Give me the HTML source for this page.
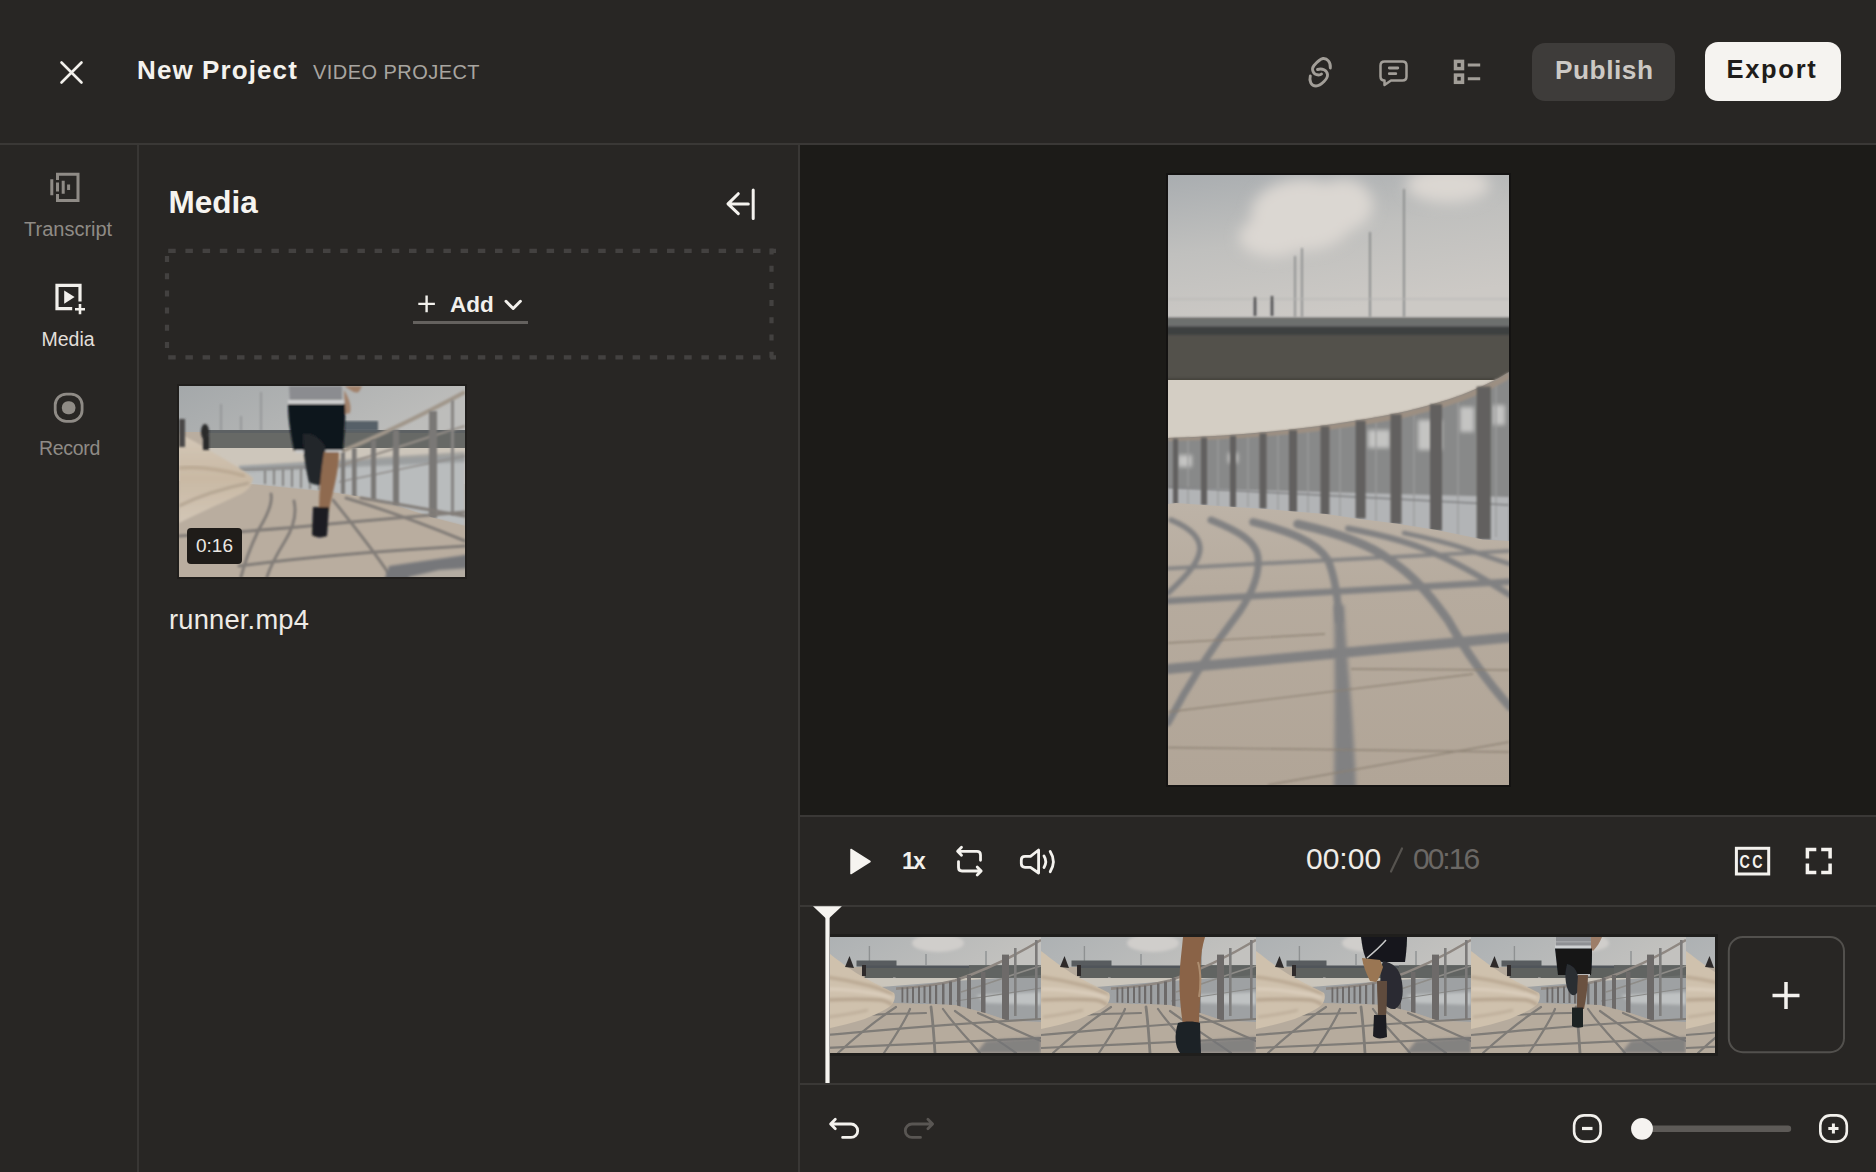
<!DOCTYPE html>
<html><head><meta charset="utf-8">
<style>
*{margin:0;padding:0;box-sizing:border-box}
html,body{width:1876px;height:1172px;overflow:hidden;background:#282624;font-family:"Liberation Sans",sans-serif}
.a{position:absolute}
.t{position:absolute;white-space:nowrap;line-height:1}
svg{position:absolute;overflow:visible}
</style></head><body>
<!-- header -->
<div class="a" style="left:0;top:0;width:1876px;height:144px;background:#282624"></div>
<div class="a" style="left:0;top:143px;width:1876px;height:2px;background:#3a3836"></div>
<svg style="left:60px;top:61px" width="23" height="23" viewBox="0 0 23 23"><path d="M1.5 1.5L21.5 21.5M21.5 1.5L1.5 21.5" stroke="#f2f0ec" stroke-width="2.6" stroke-linecap="round"/></svg>
<div class="t" id="np" style="left:137px;top:56.5px;font-size:26px;font-weight:bold;color:#f4f2ee;letter-spacing:1.1px">New Project</div>
<div class="t" id="vp" style="left:313px;top:62px;font-size:20px;color:#a8a5a0;letter-spacing:0.45px">VIDEO PROJECT</div>

<!-- header right icons -->


<div class="a" style="left:1532px;top:43px;width:143px;height:58px;border-radius:13px;background:#3e3c3a"></div>
<div class="t" id="pub" style="left:1555px;top:57px;font-size:26.3px;font-weight:bold;color:#cdc9c4;letter-spacing:0.5px">Publish</div>
<div class="a" style="left:1705px;top:42px;width:136px;height:59px;border-radius:13px;background:#f5f3f0"></div>
<div class="t" id="exp" style="left:1726.5px;top:57px;font-size:25.5px;font-weight:bold;color:#1e1c1a;letter-spacing:1.7px">Export</div>

<!-- left rail -->
<div class="a" style="left:137px;top:145px;width:2px;height:1027px;background:#383634"></div>
<div class="t" style="left:24px;top:219px;font-size:20px;color:#8f8b86">Transcript</div>
<div class="t" style="left:41.5px;top:329.5px;font-size:19.5px;color:#e2dfda">Media</div>
<div class="t" style="left:39px;top:439px;font-size:19.5px;color:#8f8b86;letter-spacing:-0.3px">Record</div>

<!-- media panel -->
<div class="t" id="mh" style="left:168.5px;top:186.5px;font-size:31.5px;font-weight:bold;color:#f6f4f0">Media</div>
<div class="t" style="left:450px;top:293.5px;font-size:22.5px;font-weight:bold;color:#f2f0ec">Add</div>
<div class="a" style="left:413px;top:321px;width:115px;height:3px;background:#64615e"></div>

<!-- thumbnail -->
<div class="a" style="left:177px;top:384px;width:290px;height:195px;background:#201e1c"></div>
<svg style="left:179px;top:386px" width="286" height="191" viewBox="0 0 286 191">
 <defs>
  <filter id="tb1" x="-10%" y="-10%" width="120%" height="120%"><feGaussianBlur stdDeviation="0.8"/></filter>
  <filter id="tb2" x="-20%" y="-20%" width="140%" height="140%"><feGaussianBlur stdDeviation="1.6"/></filter>
  <linearGradient id="tsky" x1="0" y1="0" x2="1" y2="0.3"><stop offset="0" stop-color="#a4a8aa"/><stop offset="1" stop-color="#bdbdbb"/></linearGradient>
  <linearGradient id="twall" x1="0" y1="0" x2="0" y2="1"><stop offset="0" stop-color="#d3c7b7"/><stop offset="0.5" stop-color="#c9b9a4"/><stop offset="1" stop-color="#d2c6b6"/></linearGradient>
  <clipPath id="tclip"><rect width="286" height="191"/></clipPath>
 </defs>
 <g clip-path="url(#tclip)">
 <rect width="286" height="191" fill="#b9ad9f"/>
 <rect width="286" height="46" fill="url(#tsky)"/>
 <g stroke="#8f9293" stroke-width="1.6" filter="url(#tb1)"><path d="M42 18 V45 M82 6 V45 M62 30 V45"/></g>
 <rect x="28" y="44" width="258" height="4" fill="#5d6163"/>
 <rect x="28" y="47" width="258" height="16" fill="#676966"/>
 <rect x="165" y="35" width="34" height="10" fill="#566068" filter="url(#tb1)"/>
 <rect x="80.5" y="62" width="3.5" height="22" fill="#8a8a88"/>
 <rect y="62" width="286" height="36" fill="#cdc6bb"/>
 <!-- fence -->
 <path d="M60 80 L286 70 V140 L255 132 L218 120 L195 114 L177 110 L150 106 L60 97 Z" fill="#b9bcbd" filter="url(#tb1)"/>
 <path d="M60 80 L286 66 V76 L60 86 Z" fill="#8f9293" opacity="0.7" filter="url(#tb2)"/>
 <g stroke="#757371" stroke-width="1.6" filter="url(#tb1)"><path d="M86 84 V98 M95 83 V99 M104 83 V100 M113 82 V101 M122 82 V102 M131 81 V103 M140 81 V104 M150 80 V106"/></g>
 <path d="M60 84 L150 80" stroke="#8a8886" stroke-width="2" filter="url(#tb1)"/>
 <path d="M161 66 C200 50 245 28 286 6" stroke="#a0968a" stroke-width="4" fill="none" filter="url(#tb1)"/>
 <path d="M160 80 C200 68 245 52 286 40" stroke="#979089" stroke-width="2.2" fill="none" filter="url(#tb1)"/>
 <path d="M160 96 C200 88 245 78 286 70" stroke="#8f8c89" stroke-width="1.5" fill="none" filter="url(#tb1)"/>
 <g fill="#7a7876" filter="url(#tb1)">
  <rect x="162" y="66" width="4" height="42"/><rect x="173" y="62" width="4.5" height="49"/><rect x="192" y="54" width="5" height="60"/>
  <rect x="214" y="44" width="6" height="75"/><rect x="250" y="25" width="8" height="107"/><rect x="272" y="14" width="3" height="115" fill="#868482"/>
 </g>
 <path d="M60 97 L150 106 L177 110 L195 114 L218 120 L255 132 L286 140 V191 H0 V95 Z" fill="#b9ad9f"/>
 <!-- left wall -->
 <path d="M0 48 C10 52 20 58 30 64 C45 73 62 82 74 92 C73 100 68 105 62 108 C45 116 22 126 0 137 Z" fill="url(#twall)" filter="url(#tb1)"/>
 <path d="M0 82 C20 80 45 84 66 90" stroke="#b8a690" stroke-width="3" fill="none" filter="url(#tb2)"/>
 <path d="M0 120 C20 110 45 102 70 97" stroke="#a99a87" stroke-width="2" fill="none" filter="url(#tb2)"/>
 <g fill="#2a2a2c" filter="url(#tb1)"><ellipse cx="26" cy="46" rx="4" ry="8"/><rect x="24" y="50" width="6" height="14"/><rect x="0" y="33" width="6" height="28" fill="#4a4746"/></g>
 <!-- ground shadows -->
 <g fill="none" stroke="#827d78" stroke-width="3" filter="url(#tb1)" stroke-linecap="round">
  <path d="M92 108 C94 118 88 130 80 143 C72 160 66 175 62 191"/>
  <path d="M115 115 C118 128 114 142 106 155 C98 168 92 178 88 191"/>
  <path d="M154 114 C175 140 195 165 212 191"/>
  <path d="M167 112 C210 125 250 140 286 155"/>
  <path d="M182 112 C220 118 255 125 286 130"/>
  <path d="M0 150 C60 146 110 142 150 138 L286 126"/>
  <path d="M60 180 C120 172 200 165 286 160"/>
 </g>
 <path d="M205 195 L210 180 L292 168 V195 Z" fill="#76777a" filter="url(#tb2)"/><path d="M230 191 L260 184 L292 182 V195 H230 Z" fill="#b4aca2" filter="url(#tb2)"/>
 <!-- runner -->
 <g filter="url(#tb1)">
  <path d="M110 0 H163 V16 H111 Z" fill="#8b8c90"/>
  <path d="M109 14 H165 V19 H109 Z" fill="#cfcfcf"/>
  <path d="M165 0 C172 4 178 10 181 4 L183 0 Z M165 4 C170 12 173 20 171 27 L166 28 Z" fill="#a2826c"/>
  <path d="M109 18 H166 C167 35 165 52 164 65 H115 C112 50 109 35 109 18 Z" fill="#11141a"/>
  <path d="M116 64 H163 V67 H117 Z" fill="#c9c9c9"/>
  <path d="M124 48 C130 46 140 50 146 60 L148 95 C146 100 136 100 130 96 C126 80 124 65 124 48 Z" fill="#22252b"/>
  <path d="M145 66 H160 C160 85 154 105 150 124 L140 124 C140 105 142 85 145 66 Z" fill="#8f6a50"/>
  <path d="M134 121 H150 L148 150 C143 152 137 152 133 149 Z" fill="#1c1e22"/>
 </g>
 </g>
</svg>
<div class="a" style="left:187px;top:528px;width:55px;height:36px;border-radius:4px;background:#1f1c19"></div>
<div class="t" style="left:196px;top:536px;font-size:19px;color:#ebe8e3">0:16</div>

<div class="t" id="rn" style="left:169px;top:606px;font-size:27.3px;color:#eeebe6;letter-spacing:0.2px">runner.mp4</div>

<!-- panel divider -->
<div class="a" style="left:798px;top:145px;width:2px;height:1027px;background:#393735"></div>

<!-- preview -->
<div class="a" style="left:800px;top:145px;width:1076px;height:670px;background:#1c1b18"></div>
<div class="a" style="left:800px;top:815px;width:1076px;height:2px;background:#3a3836"></div>
<div class="a" style="left:800px;top:905px;width:1076px;height:2px;background:#3a3836"></div>
<div class="a" style="left:800px;top:1083px;width:1076px;height:2px;background:#3a3836"></div>


<!-- preview frame -->
<div class="a" style="left:1166px;top:173px;width:345px;height:614px;background:#141312"></div>
<svg style="left:1168px;top:175px" width="341" height="610" viewBox="0 0 341 610">
 <defs>
  <linearGradient id="psky" x1="0" y1="0" x2="0.35" y2="1">
   <stop offset="0" stop-color="#a9adb0"/><stop offset="0.5" stop-color="#c0c0be"/><stop offset="1" stop-color="#ccc9c5"/>
  </linearGradient>
  <linearGradient id="pground" x1="0" y1="0" x2="0" y2="1">
   <stop offset="0" stop-color="#bdb3a7"/><stop offset="0.3" stop-color="#b6ab9e"/><stop offset="1" stop-color="#b1a597"/>
  </linearGradient>
  <filter id="pb1" x="-10%" y="-10%" width="120%" height="120%"><feGaussianBlur stdDeviation="0.9"/></filter>
  <filter id="pb2" x="-20%" y="-20%" width="140%" height="140%"><feGaussianBlur stdDeviation="2"/></filter>
  <filter id="pb15" x="-20%" y="-20%" width="140%" height="140%"><feGaussianBlur stdDeviation="1.4"/></filter>
  <filter id="pb6" x="-50%" y="-50%" width="200%" height="200%"><feGaussianBlur stdDeviation="7"/></filter>
  <clipPath id="pclip"><rect width="341" height="610"/></clipPath>
 </defs>
 <g clip-path="url(#pclip)">
 <rect width="341" height="610" fill="#b3a89a"/>
 <rect width="341" height="143" fill="url(#psky)"/>
 <g filter="url(#pb6)" fill="#dbd7d2">
  <ellipse cx="135" cy="40" rx="52" ry="36"/><ellipse cx="105" cy="62" rx="34" ry="20"/><ellipse cx="175" cy="30" rx="30" ry="26"/>
  <ellipse cx="280" cy="10" rx="42" ry="18"/>
 </g>
 <g filter="url(#pb1)" stroke="#8e908f" fill="none">
  <path d="M236 14 V142 M202 57 V142" stroke-width="2"/>
  <path d="M127 81 V142 M134 73 V142" stroke-width="1.8"/>
  <path d="M0 124 H341" stroke="#b4b4b2" stroke-width="1"/>
  <path d="M87 122 V141 M104 121 V141" stroke="#4a4a4c" stroke-width="2.5"/>
 </g>
 <!-- bridge -->
 <g filter="url(#pb1)">
 <rect x="-6" y="142.5" width="353" height="10" fill="#6d6f6e"/>
 <rect x="-6" y="151.5" width="353" height="9" fill="#3e403f"/>
 <rect x="-6" y="160" width="353" height="45" fill="#52514c"/>
 <rect x="-6" y="203" width="353" height="4" fill="#45423d"/>
 </g>
 <!-- haze -->
 <rect y="205" width="341" height="130" fill="#d4cec4"/>
 <!-- fence band -->
 <path d="M0 263 C80 261 160 252 230 238 C280 227 315 213 341 197 V370 L0 334 Z" fill="#888989"/>
 <g filter="url(#pb2)" fill="#cfcfcd" opacity="0.85">
  <rect x="10" y="280" width="14" height="12"/><rect x="60" y="278" width="10" height="10"/>
  <rect x="200" y="255" width="22" height="18"/><rect x="250" y="245" width="24" height="30"/>
  <rect x="292" y="232" width="14" height="25"/><rect x="325" y="230" width="12" height="20"/>
 </g>
 <path d="M0 313 L341 322 V368 L0 333 Z" fill="#b2b4b6" filter="url(#pb1)"/>
 <g stroke="#9c9c9c" stroke-width="1.3" filter="url(#pb1)">
  <path d="M20 262 V330 M50 261 V331 M80 259 V332 M110 256 V335 M140 253 V338 M172 248 V342 M208 242 V346 M246 234 V352 M290 221 V360 M328 204 V362"/>
  <path d="M0 312 L341 330" stroke="#7e7f80" stroke-width="1.5"/>
 </g>
 <path d="M0 263 C80 261 160 252 230 238 C280 227 315 213 341 197 L341 204 C315 220 280 233 230 244 C160 257 80 265 0 266 Z" fill="#9c8f82" filter="url(#pb1)"/>
 <g fill="#62615f" filter="url(#pb1)">
  <rect x="5.0" y="263.8" width="5" height="65.2"/><rect x="33.0" y="262.6" width="6" height="67.4"/><rect x="62.0" y="260.9" width="6" height="71.6"/><rect x="91.5" y="258.4" width="7" height="75.2"/><rect x="121.0" y="255.3" width="8" height="81.7"/><rect x="152.5" y="251.3" width="9" height="88.7"/><rect x="187.6" y="245.8" width="10" height="97.7"/><rect x="222.5" y="239.4" width="11" height="109.6"/><rect x="262.0" y="229.3" width="12" height="126.4"/><rect x="308.7" y="211.5" width="14" height="153.1"/>
 </g>
 <!-- ground -->
 <path d="M0 329 L8 328 L36 330 L66 332 L95 333.7 L126 336.5 L158 339 L192 344 L228 348.6 L269 355 L315 364.4 L341 366 V610 H0 Z" fill="url(#pground)"/>
 <g fill="none" stroke="#818182" stroke-linecap="round" filter="url(#pb15)">
  <path d="M3 345 C20 352 32 362 32 374 C31 386 22 398 0 418" stroke-width="5.5"/>
  <path d="M43 345 C70 356 88 366 90 382 C92 400 84 418 72 436 C55 458 25 500 0 548" stroke-width="7"/>
  <path d="M85 347 C120 356 148 366 160 385 C167 402 170 425 171 445" stroke-width="7.5"/>
  <path d="M129.5 349 C165 357 200 368 222 385 C245 400 262 420 280 445 C300 480 322 510 342 532" stroke-width="8.5"/>
  <path d="M180 353.5 C215 360 250 370 272 381 C300 393 322 408 342 420" stroke-width="6"/>
  <path d="M236 358 C260 363 280 368 298 374 C315 380 328 385 342 389" stroke-width="4.5"/>
  <path d="M0 393.4 L341 376" stroke-width="3.5"/>
  <path d="M0 426 L341 406.7" stroke-width="6.5"/>
  <path d="M0 494 L341 462.5" stroke-width="10"/>
 </g>
 <path d="M166 430 C167 480 167 540 166 615 L188 615 C186 540 178 480 176 430 Z" fill="#818182" filter="url(#pb2)"/>
 <g fill="none" stroke="#8c8173" stroke-width="1.4" filter="url(#pb1)" opacity="0.9">
  <path d="M0 468 L157 459"/><path d="M0 537 L305 499"/><path d="M183 494 L341 495"/>
  <path d="M0 572.5 L341 577"/><path d="M100 610 L341 567"/>
 </g>
 </g>
</svg>


<!-- timeline strip -->
<div class="a" style="left:827px;top:934px;width:891px;height:122px;background:#1f1e1c"></div>
<svg style="left:830px;top:937px" width="885" height="116" viewBox="0 0 885 116">
 <defs>
  <filter id="fb1" x="-10%" y="-10%" width="120%" height="120%"><feGaussianBlur stdDeviation="0.7"/></filter>
  <filter id="fb2" x="-20%" y="-20%" width="140%" height="140%"><feGaussianBlur stdDeviation="1.5"/></filter>
  <linearGradient id="fsky" x1="0" y1="0" x2="1" y2="0.2"><stop offset="0" stop-color="#adb1b3"/><stop offset="1" stop-color="#c3c2bf"/></linearGradient>
  <linearGradient id="fwall" x1="0" y1="0" x2="0" y2="1"><stop offset="0" stop-color="#d2c5b3"/><stop offset="0.45" stop-color="#c6b59f"/><stop offset="0.7" stop-color="#d6cab9"/><stop offset="1" stop-color="#c3b5a3"/></linearGradient>
  <clipPath id="fclip"><rect width="215" height="116"/></clipPath>
  <clipPath id="sclip"><rect width="885" height="116"/></clipPath>
  <symbol id="scene" viewBox="0 0 215 116" width="215" height="116">
   <g clip-path="url(#fclip)">
   <rect width="215" height="116" fill="#b6ab9d"/>
   <rect width="215" height="30" fill="url(#fsky)"/>
   <ellipse cx="112" cy="6" rx="26" ry="9" fill="#d0cecb" filter="url(#fb2)"/>
   <g stroke="#8e9192" stroke-width="1.4" filter="url(#fb1)"><path d="M43.4 9 V28 M100 17 V28 M160 14 V28"/></g>
   <rect x="30.5" y="23.5" width="40" height="6" fill="#585c5e" filter="url(#fb1)"/>
   <rect x="38.7" y="28.5" width="176.3" height="3" fill="#50555a"/>
   <rect x="38.7" y="31" width="176.3" height="10" fill="#5e615e"/>
   <rect x="67" y="40" width="2.6" height="20" fill="#8d8d8b"/>
   <rect y="41" width="215" height="10" fill="#cbc6bc"/>
   <path d="M55 50 L129 44 L215 38 V85 L183 84 L159 76 L129 68 L60 66 Z" fill="#9ea1a3" filter="url(#fb1)"/>
   <path d="M150 58 L215 55 V68 L160 66 Z" fill="#bfc2c3" filter="url(#fb2)"/>
   <path d="M143 28 H215 V41 H143 Z" fill="#626563" opacity="0.85"/>
   <path d="M70 51.6 C95 50 115 47 129 43.4 C160 33 190 18 215 3" stroke="#8f8882" stroke-width="2.6" fill="none" filter="url(#fb1)"/>
   <path d="M135 55 C165 46 190 36 215 29" stroke="#8e8c88" stroke-width="1.6" fill="none" filter="url(#fb1)"/>
   <path d="M130 64 C165 59 190 55 215 51" stroke="#8a8a88" stroke-width="1.2" fill="none" filter="url(#fb1)"/>
   <g fill="#6d6b69" filter="url(#fb1)">
    <rect x="75.5" y="50.5" width="1.8" height="15"/><rect x="80.5" y="50.3" width="1.8" height="15.5"/><rect x="86" y="50" width="2" height="16"/><rect x="92" y="49.5" width="2" height="16.5"/>
    <rect x="97.5" y="49" width="2" height="17"/><rect x="103" y="48.5" width="2.2" height="18"/><rect x="109" y="48" width="2.2" height="19"/>
    <rect x="116" y="46.5" width="2.5" height="21"/><rect x="123" y="44.5" width="3" height="24"/><rect x="131" y="41" width="3.5" height="29"/>
    <rect x="141" y="38" width="4" height="35"/><rect x="155" y="35" width="4.5" height="41"/><rect x="176" y="17.6" width="7" height="67"/>
    <rect x="188" y="11" width="2.6" height="68" fill="#7f7e7d"/><rect x="209" y="3" width="2.6" height="79" fill="#7b7a79"/>
   </g>
   <path d="M60 66 L129 68 L159 76 L183 84 L215 85 V116 H0 V90 Z" fill="#b6ab9d"/>
   <g fill="none" stroke="#7f7b77" stroke-width="2.2" filter="url(#fb1)" stroke-linecap="round">
    <path d="M70 70 C55 80 35 95 12 116"/>
    <path d="M84 72 C80 82 72 95 58 116"/>
    <path d="M105 70 C107 85 108 100 109 116" stroke-width="2.8"/>
    <path d="M117 72 C128 88 142 102 154 116"/>
    <path d="M129 74 C148 88 170 102 190 116"/>
    <path d="M152 76 C175 86 195 96 215 104"/>
    <path d="M0 98 C50 94 100 88 215 82"/>
    <path d="M0 111 C70 108 150 104 215 101"/>
    <path d="M0 80 C30 78 60 77 100 76"/>
   </g>
   <path d="M0 14 L4.7 17.6 C15 26 28 35 38.7 41 C50 47 60 52 68 56 C70 60 68 65 65.7 68 C58 74 48 78 38.7 82 C26 86 14 89 0 92 Z" fill="#cfc1ad" filter="url(#fb1)"/>
   <g fill="none" filter="url(#fb2)">
    <path d="M0 40 C15 42 30 45 45 49 C55 52 62 55 67 58" stroke="#b8a690" stroke-width="3"/>
    <path d="M0 63 C20 62 40 62 55 63 C60 64 64 66 66 68" stroke="#b3a18c" stroke-width="3"/>
    <path d="M2 80 C18 78 30 76 42 73" stroke="#b8a894" stroke-width="2"/>
    <path d="M0 52 C20 52 40 54 66 60" stroke="#dccfbe" stroke-width="3"/>
   </g>
   <g fill="#2d2c2c" filter="url(#fb1)"><path d="M19 30 L23.5 19 L28 31 Z"/><rect x="36" y="28" width="4" height="11"/></g>
   <path d="M150 116 L160 104 L215 100 V116 Z" fill="#737477" opacity="0.75" filter="url(#fb2)"/>
   </g>
  </symbol>
 </defs>
 <g clip-path="url(#sclip)">
  <use href="#scene" x="-4" y="0"/>
  <use href="#scene" x="211" y="0"/>
  <use href="#scene" x="426" y="0"/>
  <use href="#scene" x="641" y="0"/>
  <use href="#scene" x="856" y="0"/>
  <!-- frame 2 leg -->
  <g filter="url(#fb1)">
   <path d="M353 0 H375 C372 10 370 22 371 35 C371 55 369 75 369 88 L353 88 C351 75 349 55 349.5 40 C350 25 352 12 353 0 Z" fill="#8a6447"/>
   <path d="M368 25 C371 35 371 50 369 60" stroke="#ad8d70" stroke-width="2" fill="none"/>
   <path d="M348 86 C355 84 364 84 370 86 L371 116 H350 C345 110 344 98 348 86 Z" fill="#1e2127"/>
  </g>
  <!-- frame 3 runner -->
  <g filter="url(#fb1)">
   <path d="M531 0 H577 C577 8 576 18 575 25 H552 L536 22 C533 15 532 8 531 0 Z" fill="#14171c"/>
   <path d="M553 24 C562 26 570 30 572 45 C574 58 572 68 565 72 C557 73 552 66 551 55 C550 45 550 32 553 24 Z" fill="#2a2c30"/>
   <path d="M532 21 L550 23 L553 30 C551 36 549 42 546 45 L540 44 C536 36 533 28 532 21 Z" fill="#9a7652"/>
   <path d="M547 44 H557 C557 56 557 68 556 80 L548 80 C548 68 547 56 547 44 Z" fill="#5f4b3d"/>
   <path d="M544 78 L556 78 L557 100 C552 102 546 102 543 99 Z" fill="#1d1f22"/>
   <path d="M556 3 C550 10 543 16 537 21" stroke="#c8c8c8" stroke-width="1.5" fill="none"/>
  </g>
  <!-- frame 4 runner -->
  <g filter="url(#fb1)">
   <path d="M726 0 H763 V9.5 H726 Z" fill="#8e9094"/>
   <path d="M726 4 H763 V5.5 H726 Z" fill="#a3a5a8"/>
   <path d="M725 8.5 H763 V12 H725 Z" fill="#cdd0d2"/>
   <path d="M761 0 L772 0 C770 5 767 10 763 14 L761 12 Z" fill="#9d7e69"/>
   <path d="M725 11.5 H762 C762 20 762 30 761 38 H728 C727 30 726 20 725 11.5 Z" fill="#131619"/>
   <path d="M740 37 H760 V39.5 H741 Z" fill="#b9b9b9"/>
   <path d="M737 27 C744 28 749 35 749 48 C749 55 746 59 742 58 C737 55 735 45 735.5 35 Z" fill="#2a2d33"/>
   <path d="M748 38 H758 C758 50 756 62 754 72 L747 72 C747 60 747 50 748 38 Z" fill="#6b5141"/>
   <path d="M742 70.5 L753 70.5 L753 90 C749 91 745 91 742 89 Z" fill="#1e2124"/>
  </g>
 </g>
</svg>

<div class="t" id="tm" style="left:1306px;top:843.5px;font-size:30px;color:#efece7">00:00</div>
<svg style="left:1385px;top:844px" width="24" height="32" viewBox="0 0 24 32"><path d="M6 27.5 L17 4.5" stroke="#56534f" stroke-width="2.2" stroke-linecap="round"/></svg>
<div class="t" style="left:1413px;top:843.5px;font-size:30px;color:#6b6865;letter-spacing:-2px">00:16</div>
<div class="t" style="left:902px;top:849.5px;font-size:23px;font-weight:bold;color:#f2f0ec;letter-spacing:-1.8px">1x</div>
<svg style="left:0;top:0" width="1876" height="1172" viewBox="0 0 1876 1172">
 <g fill="none" stroke="#a29e98" stroke-width="2.5" stroke-linecap="round" stroke-linejoin="round">
  <g transform="translate(1300 50)" stroke-width="2.9">
   <path d="M30.3 18 C31 12 27 8 23 8.5 C20 9 17 12 14 15.5 C11 19 13 25 18.5 25 C20 25 21 24.5 21.5 24"/>
   <path d="M17.5 19.5 C22 18 27 20 27.5 24.5 C27.8 27 26 29.5 24 31.5 C21 34.5 19 36 16 36 C11 36 9 31 10.3 26"/>
  </g>
  <path d="M1384.5 61.5 H1402.5 Q1406.5 61.5 1406.5 65.5 V76.5 Q1406.5 80.5 1402.5 80.5 H1391 L1384.5 85 V80.5 Q1380.5 80.5 1380.5 76.5 V65.5 Q1380.5 61.5 1384.5 61.5 Z"/>
  <path d="M1389.3 68 H1397.8 M1389.3 73.7 H1395.8" stroke-width="2.8"/>
  <rect x="1455.5" y="61.4" width="7" height="7.2" stroke-width="3.5" stroke-linejoin="miter"/>
  <rect x="1455.5" y="75.1" width="7" height="7.2" stroke-width="3.5" stroke-linejoin="miter"/>
  <path d="M1467.8 65.1 H1480.2 M1467.8 78.8 H1480.2" stroke-width="3" stroke-linecap="butt"/>
 </g>
 <!-- transcript icon -->
 <g fill="none" stroke="#8f8b86" stroke-width="3" stroke-linecap="butt">
  <path d="M57.5 180 V174.2 H78 V200.6 H57.5 V194"/>
  <path d="M51.8 179.2 V195.3 M57.5 182.5 V191.5 M63.2 180.7 V193.8 M68.6 184.6 V190"/>
 </g>
 <!-- media icon -->
 <g fill="none" stroke="#f2f0ec" stroke-width="3.2" stroke-linecap="butt">
  <path d="M80 301.5 V285.4 H57 V308.7 H72.2"/>
  <path d="M80 304 V314.2 M75 309.2 H85" stroke-width="2.6"/>
 </g>
 <path d="M64.2 290.4 L74.6 297.1 L64.2 303.8 Z" fill="#f2f0ec"/>
 <!-- record icon -->
 <rect x="55.2" y="394.1" width="26.9" height="27.2" rx="11" fill="none" stroke="#8f8b86" stroke-width="2.8"/>
 <rect x="61.9" y="401.3" width="13.5" height="13" rx="6" fill="#8f8b86"/>
 <!-- collapse -->
 <path d="M738.3 193.7 L728 203.9 L738.3 213.7 M728.5 203.9 H748.3 M753.2 190 V218.5" fill="none" stroke="#f4f2ee" stroke-width="3" stroke-linecap="round" stroke-linejoin="round"/>
 <!-- add -->
 <path d="M426.6 295.6 V312.2 M418.3 303.9 H434.9" stroke="#f2f0ec" stroke-width="2.4"/>
 <path d="M506 301.3 L513.2 308.5 L520.4 301.3" fill="none" stroke="#f2f0ec" stroke-width="3" stroke-linecap="round" stroke-linejoin="round"/>
 <!-- controls -->
 <path d="M851 849.5 L870 861.5 L851 873.5 Z" fill="#f6f4f0" stroke="#f6f4f0" stroke-width="1.5" stroke-linejoin="round"/>
 <g fill="none" stroke="#f4f2ee" stroke-width="2.8" stroke-linecap="round" stroke-linejoin="round">
  <path d="M961.5 847.3 L957.6 851.3 L961.5 855.3 M958 851.3 H977 Q980.5 851.3 980.5 855 V860.3"/>
  <path d="M958.5 861.6 V867.2 Q958.5 871 962 871 H981 M977.2 867 L981.2 871 L977.2 875"/>
  <path d="M1038.6 850 V873 L1030.5 867.3 H1025 Q1021.3 867.3 1021.3 863.6 V860 Q1021.3 856.3 1025 856.3 H1030.5 Z"/>
  <path d="M1044 856 Q1047.5 861.5 1044 867.5 M1050.2 851.5 Q1056.5 861.5 1050.2 871.8"/>
 </g>
 <rect x="1736.4" y="848.3" width="32.3" height="25.7" fill="none" stroke="#f4f2ee" stroke-width="3"/>
 <text x="1739.6" y="867.6" font-family="Liberation Sans" font-weight="bold" font-size="18" fill="#f4f2ee" textLength="25.4" lengthAdjust="spacingAndGlyphs" style="letter-spacing:3px">CC</text>
 <path d="M1807.4 858.5 V849.6 H1816.3 M1821.2 849.6 H1830.1 V858.5 M1830.1 863.5 V872.4 H1821.2 M1816.3 872.4 H1807.4 V863.5" fill="none" stroke="#f4f2ee" stroke-width="3.5"/>
 <!-- add clip -->
 <rect x="1728.8" y="937" width="115.2" height="115.2" rx="14" fill="none" stroke="#52504d" stroke-width="2"/>
 <path d="M1786 982 V1009 M1772.5 995.5 H1799.5" stroke="#f4f2ee" stroke-width="3.5"/>
 <!-- undo redo -->
 <g fill="none" stroke-width="2.8" stroke-linecap="round" stroke-linejoin="round">
  <path d="M835.3 1119.3 L830.6 1124 L835.3 1128.7 M831 1124 H851 A6.7 6.7 0 0 1 851 1137.4 H842.6" stroke="#f4f2ee"/>
  <path d="M927.9 1119.3 L932.6 1124 L927.9 1128.7 M932.2 1124 H912 A6.7 6.7 0 0 0 912 1137.4 H920.5" stroke="#595653"/>
 </g>
 <!-- zoom -->
 <rect x="1574.1" y="1115.4" width="26.5" height="26.2" rx="10" fill="none" stroke="#f2f0ec" stroke-width="2.6"/>
 <path d="M1582 1128.5 H1592.5" stroke="#f2f0ec" stroke-width="3.2"/>
 <path d="M1642 1128.8 H1788" stroke="#5d5a57" stroke-width="6.4" stroke-linecap="round"/>
 <circle cx="1642" cy="1128.8" r="10.9" fill="#f5f3f0"/>
 <rect x="1820.3" y="1115.4" width="26.5" height="26.2" rx="10" fill="none" stroke="#f2f0ec" stroke-width="2.6"/>
 <path d="M1828.3 1128.5 H1838.5 M1833.4 1123.4 V1133.6" stroke="#f2f0ec" stroke-width="3"/>
 <!-- playhead -->
 <path d="M813 906.3 H841.9 L827.4 919.7 Z" fill="#f6f4f0"/>
 <rect x="825.4" y="910" width="4.2" height="173" fill="#f6f4f0"/>
 <!-- dashed box -->
 <path d="M168.2 250.8 H776 M168.2 357.3 H776" fill="none" stroke="#434140" stroke-width="4.2" stroke-dasharray="7.5 9.7"/><path d="M167 256 V357 M771.5 248.5 V362" fill="none" stroke="#434140" stroke-width="4.2" stroke-dasharray="6 11.2"/>
</svg>
</body></html>
